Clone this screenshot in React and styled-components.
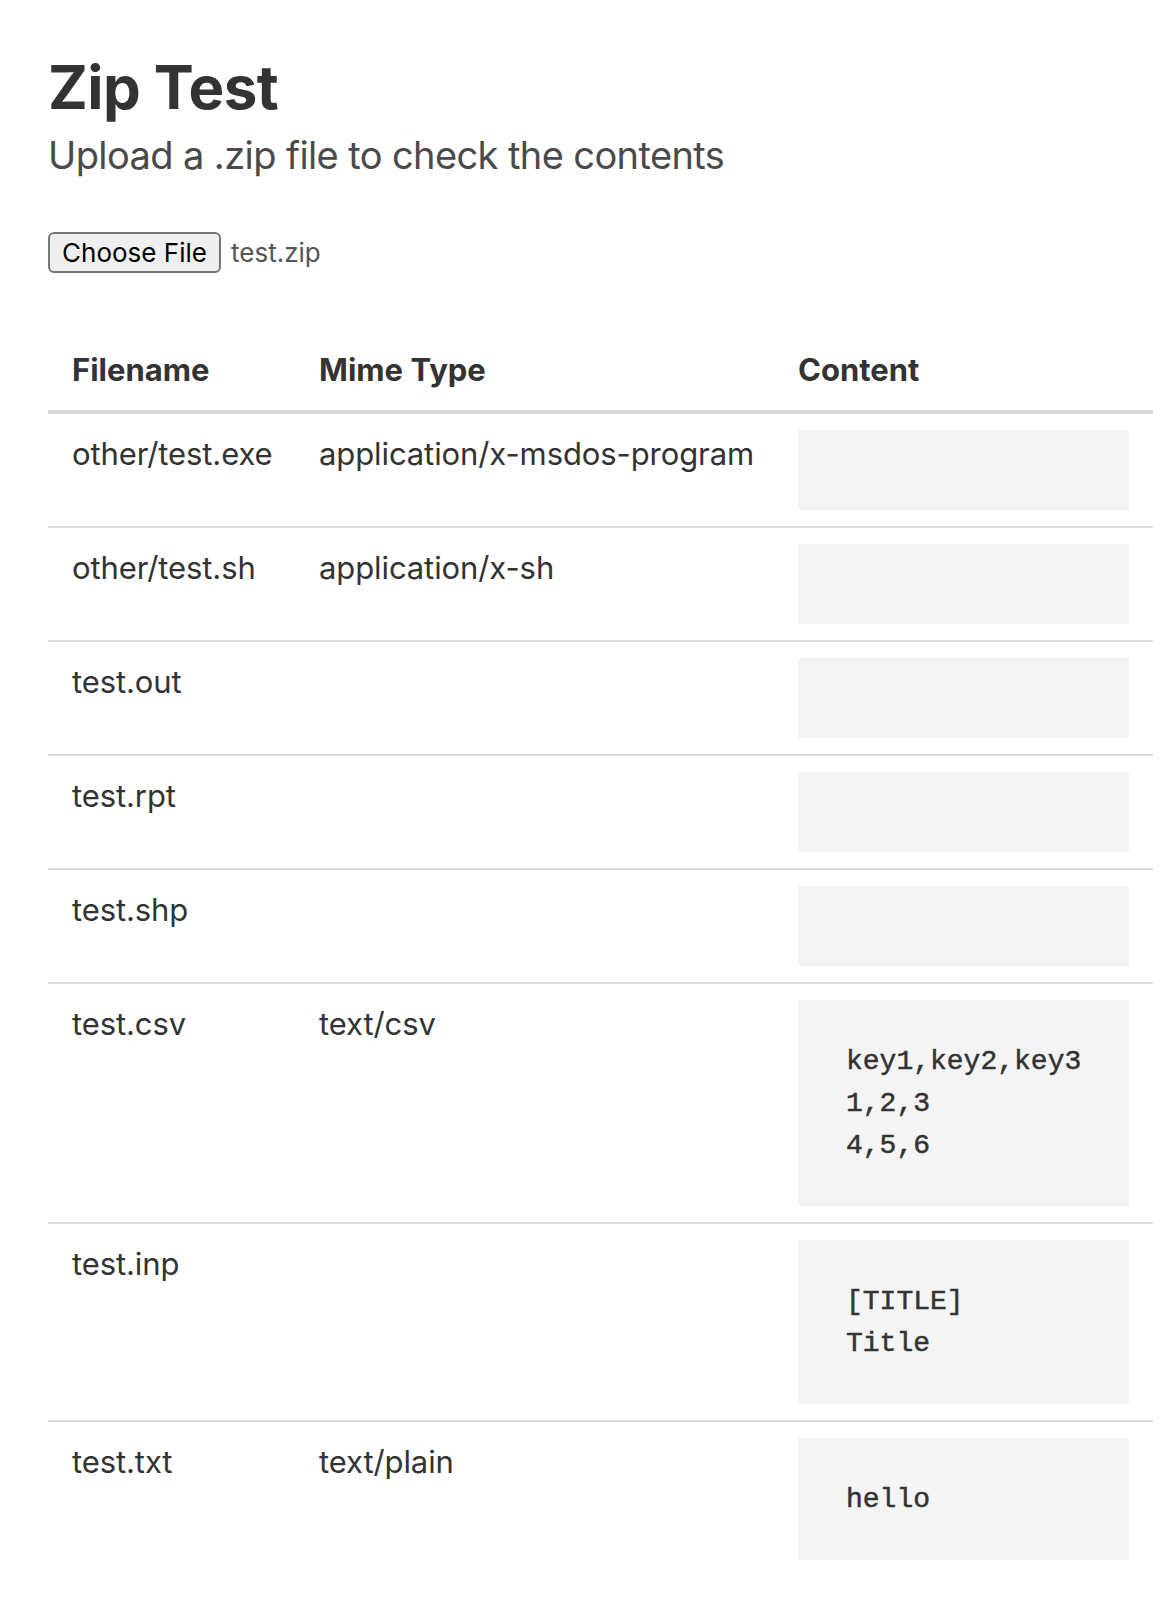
import React from "react";
import styled, { createGlobalStyle } from "styled-components";

const GlobalStyle = createGlobalStyle`
  html, body {
    margin: 0;
    padding: 0;
    background: #ffffff;
  }
  body {
    font-family: Inter, "Liberation Sans", sans-serif;
    color: #333333;
  }
`;

const Page = styled.div`
  padding: 51px 21px 0 48px;
`;

const Title = styled.h1`
  margin: 0;
  font-size: 60px;
  line-height: 72px;
  font-weight: 700;
  color: #333333;
  letter-spacing: -0.6px;
`;

const Subtitle = styled.p`
  margin: 8px 0 0;
  font-size: 38px;
  line-height: 48px;
  font-weight: 400;
  color: #4a4a4a;
  letter-spacing: -0.6px;
`;

const FileRow = styled.div`
  display: flex;
  align-items: center;
  gap: 10px;
  margin-top: 53px;
`;

const ChooseButton = styled.button`
  box-sizing: border-box;
  width: 173px;
  height: 41px;
  padding: 0;
  border: 2px solid #767676;
  border-radius: 6px;
  background: #efefef;
  color: #000000;
  font-family: Inter, "Liberation Sans", sans-serif;
  font-size: 26px;
  line-height: 1;
`;

const FileName = styled.span`
  font-size: 26px;
  color: #555555;
`;

const Table = styled.table`
  margin-top: 57px;
  width: 1105px;
  border-collapse: collapse;
  table-layout: fixed;
`;

const HeadCell = styled.th`
  padding: 16px 24px;
  text-align: left;
  font-size: 31px;
  line-height: 48px;
  font-weight: 700;
  color: #333333;
  border-bottom: 4px solid #d9d9d9;
`;

const Row = styled.tr`
  border-bottom: ${props => (props.$last ? "none" : "2px solid #dcdcdc")};
`;

const Cell = styled.td`
  padding: 16px 24px;
  vertical-align: top;
  font-size: 31px;
  line-height: 48px;
  color: #333333;
  white-space: nowrap;
  letter-spacing: -0.1px;
`;

const Content = styled.pre`
  margin: 0;
  padding: 41px 48px 39px;
  background: #f4f4f4;
  font-family: "Liberation Mono", "Courier New", monospace;
  font-size: 28px;
  line-height: 42px;
  font-weight: 400;
  color: #333333;
  -webkit-text-stroke: 0.5px #333333;
  white-space: pre;
  letter-spacing: 0;
`;

const files = [
  { name: "other/test.exe", mime: "application/x-msdos-program", content: "" },
  { name: "other/test.sh", mime: "application/x-sh", content: "" },
  { name: "test.out", mime: "", content: "" },
  { name: "test.rpt", mime: "", content: "" },
  { name: "test.shp", mime: "", content: "" },
  { name: "test.csv", mime: "text/csv", content: "key1,key2,key3\n1,2,3\n4,5,6" },
  { name: "test.inp", mime: "", content: "[TITLE]\nTitle" },
  { name: "test.txt", mime: "text/plain", content: "hello" }
];

export default function App() {
  return (
    <Page>
      <GlobalStyle />
      <Title>Zip Test</Title>
      <Subtitle>Upload a .zip file to check the contents</Subtitle>
      <FileRow>
        <ChooseButton type="button">Choose File</ChooseButton>
        <FileName>test.zip</FileName>
      </FileRow>
      <Table>
        <colgroup>
          <col style={{ width: 247 }} />
          <col style={{ width: 479 }} />
          <col style={{ width: 379 }} />
        </colgroup>
        <thead>
          <tr>
            <HeadCell>Filename</HeadCell>
            <HeadCell>Mime Type</HeadCell>
            <HeadCell>Content</HeadCell>
          </tr>
        </thead>
        <tbody>
          {files.map((f, i) => (
            <Row key={f.name} $last={i === files.length - 1}>
              <Cell>{f.name}</Cell>
              <Cell>{f.mime}</Cell>
              <Cell>
                <Content>{f.content}</Content>
              </Cell>
            </Row>
          ))}
        </tbody>
      </Table>
    </Page>
  );
}
